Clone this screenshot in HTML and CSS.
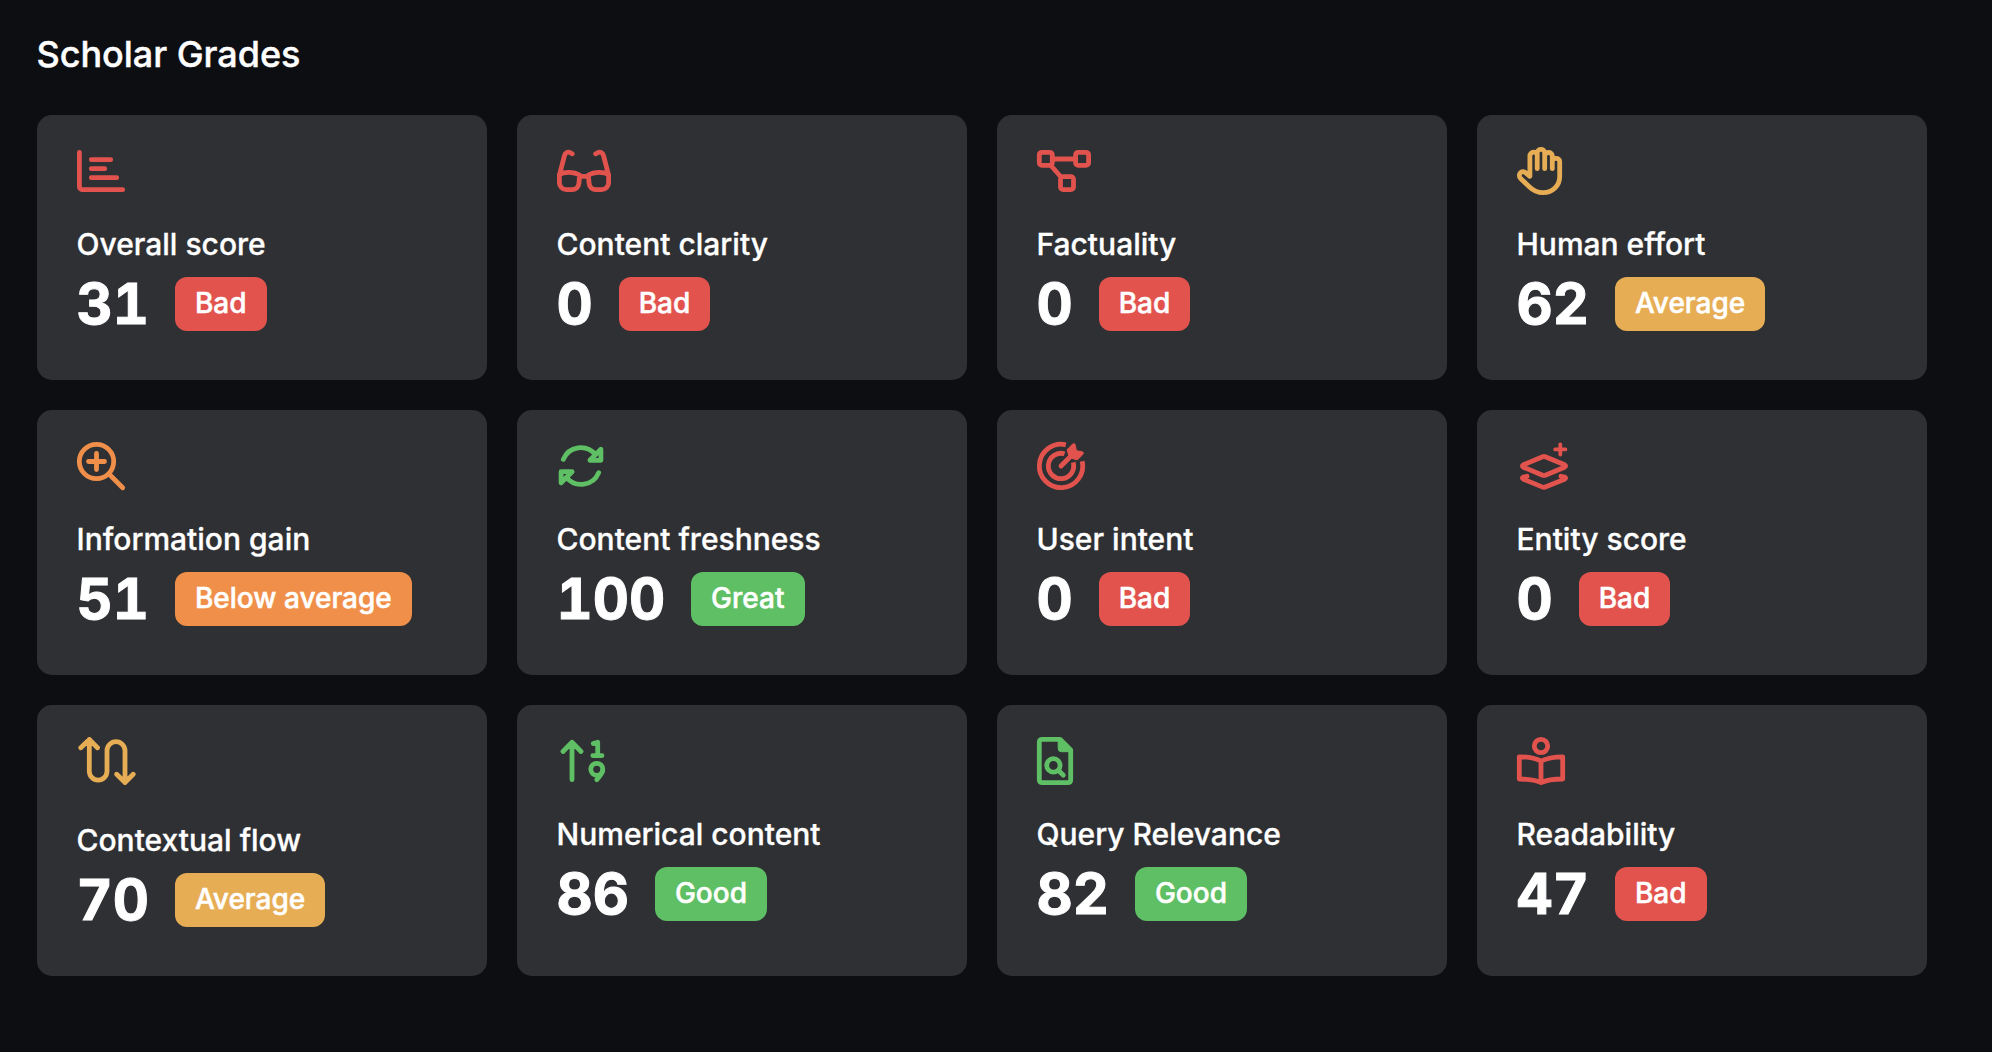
FILE: index.html
```html
<!DOCTYPE html>
<html lang="en">
<head>
	<meta charset="UTF-8">
	<title>Scholar Grades</title>
	<link rel="stylesheet" href="styles.css">
</head>
<body>
	<div class="main">
		<h1>Scholar Grades</h1>
		<div class="grid">
			<div class="card bad">
				<svg class="icon" viewBox="0 0 48 48"><path d="M2.4 5.3V39.4a3.3 3.3 0 0 0 3.3 3.3H45.7M14.3 12.7H33.7M14.3 21.7H27.7M14.3 30.7H39.7"/></svg>
				<div class="label">Overall score</div>
				<div class="score"><span class="num">31</span><span class="badge">Bad</span></div>
			</div>
			<div class="card bad">
				<svg class="icon" viewBox="0 0 48 48"><path d="M15.3 6.8L13.6 5.9C10.6 4.3 8.2 5.6 7.4 8.8L2.7 27M38.7 6.8L40.4 5.9C43.4 4.3 45.8 5.6 46.6 8.8L51.3 27M2.4 27.3C8 24.6 17 24.8 22.7 28L21.9 36.4A7 7 0 0 1 15 42.7H9.4A7 7 0 0 1 2.4 35.7ZM51.6 27.3C46 24.6 37 24.8 31.3 28L32.1 36.4A7 7 0 0 0 39 42.7H44.6A7 7 0 0 0 51.6 35.7ZM23.5 29.3H30.5"/></svg>
				<div class="label">Content clarity</div>
				<div class="score"><span class="num">0</span><span class="badge">Bad</span></div>
			</div>
			<div class="card bad">
				<svg class="icon" viewBox="0 0 48 48"><rect x="2.3" y="5.3" width="13" height="13" rx="2.6"/><rect x="38.6" y="5.3" width="13" height="13" rx="2.6"/><rect x="23.5" y="29.6" width="13" height="13" rx="2.6"/><path d="M16 12H38M13.5 18L24 30"/></svg>
				<div class="label">Factuality</div>
				<div class="score"><span class="num">0</span><span class="badge">Bad</span></div>
			</div>
			<div class="card average">
				<svg class="icon" viewBox="0 0 48 48"><path d="M20.2 21.7V5.8M20.2 8.5C20.2 4 12.9 4 12.9 9V29.3L8.8 25.8C4.8 22.5 0 27.5 3.6 31.4L12 39.5C16 43.5 20.5 45.7 26.3 45.7C35.5 45.7 42.7 38.8 42.7 29.5V14.5C42.7 10.5 35.3 10.3 35.3 14.5M35.3 21.7V9C35.3 4.3 27.7 4.3 27.7 9M27.7 21.7V6C27.7 1.2 20.2 1.2 20.2 6"/></svg>
				<div class="label">Human effort</div>
				<div class="score"><span class="num">62</span><span class="badge">Average</span></div>
			</div>

			<div class="card below">
				<svg class="icon" viewBox="0 0 48 48"><circle cx="19.5" cy="19.5" r="17.2"/><path d="M32 32L45.7 45.7M19.5 11.5V27.5M11.5 19.5H27.5"/></svg>
				<div class="label">Information gain</div>
				<div class="score"><span class="num">51</span><span class="badge">Below average</span></div>
			</div>
			<div class="card good">
				<svg class="icon" viewBox="0 0 48 48"><path d="M6.3 17.3A18.9 18.9 0 0 1 38.4 12.5M43.9 7.3V18.3H32.9ZM41.7 30.7A18.9 18.9 0 0 1 9.6 35.5M4.1 40.7V29.7H15.1Z"/></svg>
				<div class="label">Content freshness</div>
				<div class="score"><span class="num">100</span><span class="badge">Great</span></div>
			</div>
			<div class="card bad">
				<svg class="icon" viewBox="0 0 48 48"><path class="flat" d="M28.8 2.8A21.7 21.7 0 1 0 45.2 19.2M27.6 11.8A12.7 12.7 0 1 0 36.2 20.4"/><path d="M24 24L34.5 13.5"/><path class="fill" d="M30.6 7.2L35.6 2.1Q37.6 .7 38.4 3.2L39.3 8.7L44.9 9.6Q47.3 10.4 45.9 12.4L40.8 17.4Q40.2 17.8 39.2 17.6L32.4 15.6L30.4 8.8Q30.2 7.8 30.6 7.2Z"/></svg>
				<div class="label">User intent</div>
				<div class="score"><span class="num">0</span><span class="badge">Bad</span></div>
			</div>
			<div class="card bad">
				<svg class="icon" viewBox="0 0 48 48"><path d="M25.7 14.7L6.4 22.8Q4.3 24 6.4 25.2L25.7 33.3Q27 33.8 28.3 33.3L47.6 25.2Q49.7 24 47.6 22.8L28.3 14.7Q27 14.2 25.7 14.7ZM10 34.3L6.4 35Q4.3 36 6.4 37.2L25.7 45.1Q27 45.6 28.3 45.1L47.6 37.2Q49.7 36 47.6 35L44 34.3"/><path class="plus" d="M43.3 2.3V12.5M38.2 7.4H48.4"/></svg>
				<div class="label">Entity score</div>
				<div class="score"><span class="num">0</span><span class="badge">Bad</span></div>
			</div>

			<div class="card average">
				<svg class="icon tall" viewBox="0 0 54 54"><path d="M12.3 2.5V34.3A8.8 8.8 0 0 0 30 34.3V13.7A9 9 0 0 1 48 13.7V45.5M3.8 10.8L12.3 2.5L20.5 10.8M39.7 37.2L48 45.5L56.2 37.2"/></svg>
				<div class="label">Contextual flow</div>
				<div class="score"><span class="num">70</span><span class="badge">Average</span></div>
			</div>
			<div class="card good">
				<svg class="icon" viewBox="0 0 48 48"><path d="M15 5.5V42.7M6 14.5L15 5.3L24 14.5M36.3 6.6L40.7 5.3V18.6M35.8 18.6H45"/><circle cx="39.8" cy="32.3" r="6"/><path d="M45.6 33.5C45.3 36.5 43.5 38.5 39.8 42.7"/></svg>
				<div class="label">Numerical content</div>
				<div class="score"><span class="num">86</span><span class="badge">Good</span></div>
			</div>
			<div class="card good">
				<svg class="icon" viewBox="0 0 48 48"><path d="M5.3 2.3H23L33.7 13V42.7Q33.7 45.7 30.7 45.7H5.3Q2.3 45.7 2.3 42.7V5.3Q2.3 2.3 5.3 2.3Z"/><path class="fill" d="M21.2 1.5V11.5Q21.2 14.7 24.4 14.7H34.5L33.5 12L23.5 2Z"/><circle cx="16.4" cy="28.4" r="6.7"/><path d="M21.5 33.5L26.4 38.2"/></svg>
				<div class="label">Query Relevance</div>
				<div class="score"><span class="num">82</span><span class="badge">Good</span></div>
			</div>
			<div class="card bad">
				<svg class="icon" viewBox="0 0 48 48"><circle cx="24" cy="9" r="6.7"/><path d="M24 24.2C18.5 21.2 10.5 19.8 2.3 19.8V42C10.5 42 18.5 43 24 45.7C29.5 43 37.5 42 45.7 42V19.8C37.5 19.8 29.5 21.2 24 24.2ZM24 24.2V45"/></svg>
				<div class="label">Readability</div>
				<div class="score"><span class="num">47</span><span class="badge">Bad</span></div>
			</div>
		</div>
	</div>
</body>
</html>
```
FILE: styles.css
```css
body {
	margin: 0;
	background: #0d0e12;
	color: #fff;
	font-family: Inter, sans-serif;
}
.main {
	padding: 32px 65px 0 37px;
}
h1 {
	margin: 0 0 39px;
	font-size: 36px;
	line-height: 44px;
	font-weight: 500;
	letter-spacing: -0.03px;
	text-indent: -0.5px;
	-webkit-text-stroke: 0.4px;
}
.grid {
	display: grid;
	grid-template-columns: repeat(4, 450px);
	gap: 30px;
}
.card {
	box-sizing: border-box;
	padding: 32px 40px 49px;
	border-radius: 15px;
	background: #2f3034;
}
.icon {
	display: block;
	width: 48px;
	height: 48px;
	overflow: visible;
	fill: none;
	stroke: currentColor;
	stroke-width: 4.8;
	stroke-linecap: round;
	stroke-linejoin: round;
}
.tall {
	width: 54px;
	height: 54px;
}
.flat {
	stroke-linecap: butt;
}
.fill {
	fill: currentColor;
	stroke-width: 1;
}
.plus {
	stroke-width: 3.8;
}
.label {
	margin-top: 31px;
	font-size: 30px;
	line-height: 36px;
	font-weight: 500;
	text-indent: -0.5px;
	-webkit-text-stroke: 0.3px;
}
.score {
	display: flex;
	align-items: center;
	gap: 26px;
	height: 54px;
	margin-top: 15px;
}
.num {
	font-size: 56px;
	line-height: 54px;
	font-weight: 700;
	font-feature-settings: "tnum";
	text-indent: -0.5px;
	-webkit-text-stroke: 1px;
}
.badge {
	height: 54px;
	padding: 0 20px;
	border-radius: 12px;
	font-size: 28px;
	line-height: 52px;
	font-weight: 500;
	-webkit-text-stroke: 0.5px;
}
.bad .icon {
	color: #e2534e;
}
.bad .badge {
	background: #e2534e;
}
.below .icon {
	color: #f08f49;
}
.below .badge {
	background: #f08f49;
}
.average .icon {
	color: #e6ad55;
}
.average .badge {
	background: #e6ad55;
}
.good .icon {
	color: #5fbf64;
}
.good .badge {
	background: #5fbf64;
}
```
